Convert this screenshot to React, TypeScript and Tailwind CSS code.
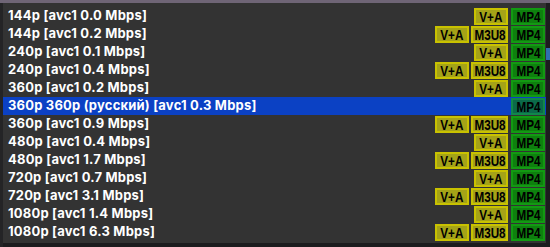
type Row = { label: string; va?: boolean; m3u8?: boolean; selected?: boolean }

const rows: Row[] = [
  { label: '144p [avc1 0.0 Mbps]', va: true },
  { label: '144p [avc1 0.2 Mbps]', va: true, m3u8: true },
  { label: '240p [avc1 0.1 Mbps]', va: true },
  { label: '240p [avc1 0.4 Mbps]', va: true, m3u8: true },
  { label: '360p [avc1 0.2 Mbps]', va: true },
  { label: '360p 360p (русский) [avc1 0.3 Mbps]', selected: true },
  { label: '360p [avc1 0.9 Mbps]', va: true, m3u8: true },
  { label: '480p [avc1 0.4 Mbps]', va: true },
  { label: '480p [avc1 1.7 Mbps]', va: true, m3u8: true },
  { label: '720p [avc1 0.7 Mbps]', va: true },
  { label: '720p [avc1 3.1 Mbps]', va: true, m3u8: true },
  { label: '1080p [avc1 1.4 Mbps]', va: true },
  { label: '1080p [avc1 6.3 Mbps]', va: true, m3u8: true },
]

function Badge({ text, kind, width }: { text: string; kind: 'yellow' | 'green' | 'teal'; width: string }) {
  const cls =
    kind === 'green'
      ? 'bg-[#0e800e] border-[#129a12]'
      : kind === 'teal'
        ? 'bg-[#0b6a4a] border-[#10884a]'
        : 'bg-[#a5a318] border-[#c9c200]'
  return (
    <div
      className={`${cls} ${width} h-[17px] border-2 flex items-center justify-center overflow-hidden`}
    >
      <span className="inline-block scale-x-[0.78] text-[15px] font-bold leading-none text-black font-['Liberation_Sans',Arial,sans-serif]">
        {text}
      </span>
    </div>
  )
}

export default function App() {
  return (
    <div className="w-[550px] h-[247px] bg-[#1c1c1e] flex flex-col overflow-hidden">
      <div className="h-[3px] shrink-0 bg-[#6f6576]" />
      <div className="flex flex-1">
        <div className="w-[3px] shrink-0 bg-[#242426]" />
        <div className="w-[543px] h-[240px] bg-[#333333] pt-[4px] flex flex-col font-['Inter',sans-serif]">
          {rows.map((r) => (
            <div
              key={r.label}
              className={`h-[18px] flex items-center pl-[5px] pr-[1px] ${r.selected ? 'bg-[#0b41c4]' : ''}`}
            >
              <span className="flex-1 text-[13px] tracking-[0.2px] font-bold text-white whitespace-nowrap">{r.label}</span>
              <div className="flex items-center">
                {r.va && <Badge text="V+A" kind="yellow" width="w-[34px]" />}
                {r.m3u8 && (
                  <div className="ml-[2px]">
                    <Badge text="M3U8" kind="yellow" width="w-[37px]" />
                  </div>
                )}
                <div className="ml-[3px]">
                  <Badge text="MP4" kind={r.selected ? 'teal' : 'green'} width="w-[34px]" />
                </div>
              </div>
            </div>
          ))}
        </div>
        <div className="flex-1 flex flex-col">
          <div className="h-[45px]" />
          <div className="h-[12px] bg-[#2f6fb0]" />
        </div>
      </div>
    </div>
  )
}
